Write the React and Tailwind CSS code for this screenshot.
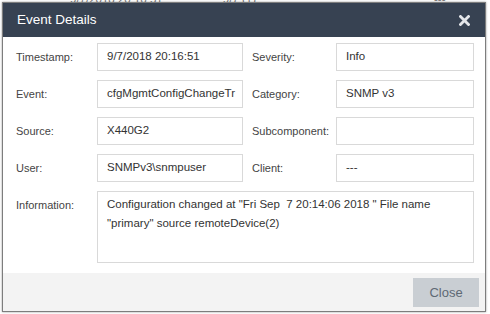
// Event Details modal over the events table.

const font = { fontFamily: '"Liberation Sans", Arial, sans-serif' };

const left = [
  ["Timestamp:", "9/7/2018 20:16:51"],
  ["Event:", "cfgMgmtConfigChangeTr"],
  ["Source:", "X440G2"],
  ["User:", "SNMPv3\\snmpuser"],
];
const right = [
  ["Severity:", "Info"],
  ["Category:", "SNMP v3"],
  ["Subcomponent:", ""],
  ["Client:", "---"],
];

function Field({ value, w }) {
  return (
    <div className={`flex h-[28px] ${w} items-center overflow-hidden whitespace-nowrap border border-[#d9d9d9] bg-white pl-[9px] text-[11.5px] text-[#333]`}>
      {value}
    </div>
  );
}

function CloseX() {
  return (
    <svg width="11" height="11" viewBox="0 0 11 11" className="text-[#e4e6ea]">
      <path d="M1.5 1.5 L9.5 9.5 M9.5 1.5 L1.5 9.5" stroke="currentColor" strokeWidth="2.8" strokeLinecap="square" />
    </svg>
  );
}

export default function App() {
  return (
    <div className="relative h-[314px] w-[490px] overflow-hidden bg-white" style={font}>
      {/* table row peeking above the dialog */}
      <div className="absolute left-0 top-[-9px] flex w-full text-[11.5px] text-[#777]">
        <span className="ml-[70px]">9/7/2018 20:16:51</span>
        <span className="ml-[60px]">9/7 (1)</span>
        <span className="ml-[178px]">---</span>
      </div>

      <div className="relative ml-[2px] mt-[2px] flex h-[310px] w-[484px] flex-col border border-[#7d7d7d] bg-white shadow-[0_0_2px_rgba(0,0,0,0.4)]">
        <div className="flex h-[34px] items-center justify-between bg-[#374252] pl-[14px] pr-[15px]">
          <span className="text-[13.5px] text-white">Event Details</span>
          <CloseX />
        </div>

        <div className="flex flex-1 flex-col gap-[9px] pl-[13px] pt-[6px]">
          {left.map(([la, va], i) => (
            <div key={la} className="flex items-center">
              <span className="w-[81px] text-[11px] text-[#444]">{la}</span>
              <Field value={va} w="w-[146px]" />
              <span className="ml-[9px] w-[84px] text-[11px] text-[#444]">{right[i][0]}</span>
              <Field value={right[i][1]} w="w-[138px]" />
            </div>
          ))}
          <div className="flex items-start">
            <span className="w-[81px] pt-[6px] text-[11px] text-[#444]">Information:</span>
            <div className="h-[72px] w-[377px] border border-[#d9d9d9] pl-[9px] pt-[3px] text-[11.5px] leading-[19px] text-[#333]">
              <div className="whitespace-pre">Configuration changed at "Fri Sep  7 20:14:06 2018 " File name</div>
              <div>"primary" source remoteDevice(2)</div>
            </div>
          </div>
        </div>

        <div className="flex h-[38px] items-start justify-end bg-[#f3f3f3] pr-[6px] pt-[5px]">
          <button className="h-[29px] w-[66px] bg-[#c9ced3] text-[13px] text-[#5e6975]">Close</button>
        </div>
      </div>
    </div>
  );
}
